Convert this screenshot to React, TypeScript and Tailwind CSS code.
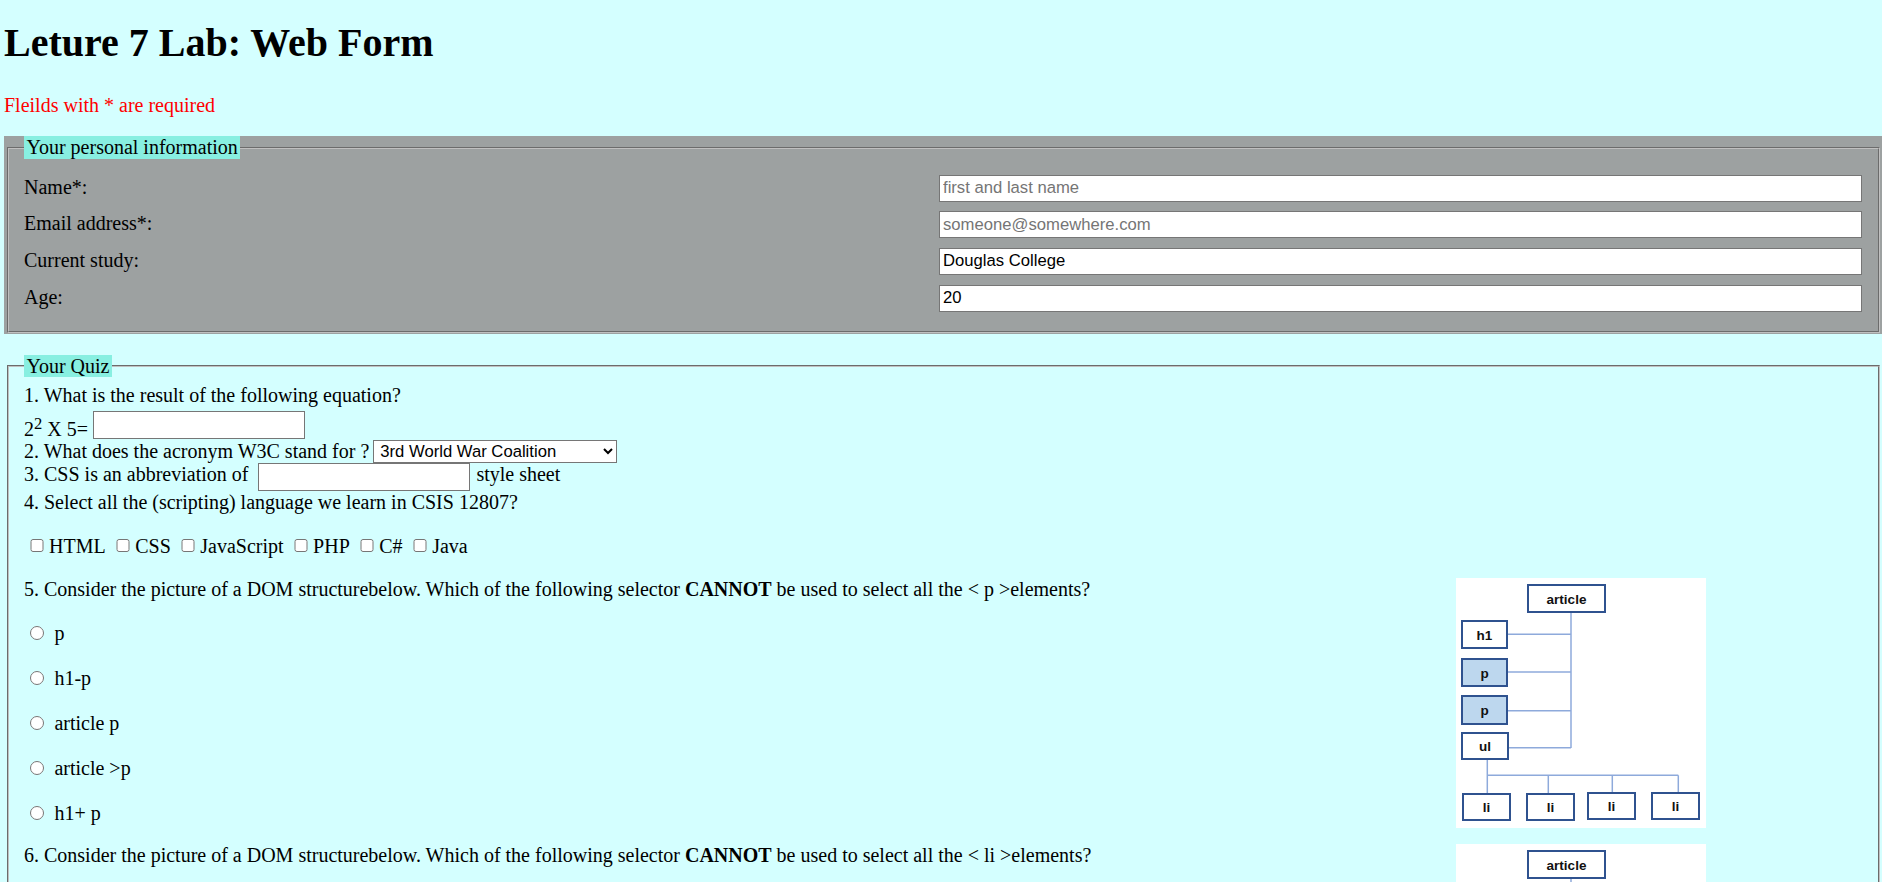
import React from 'react';

const inputCls =
  "bg-white border border-[#767676] px-[3px] font-['Liberation_Sans',Arial,sans-serif] text-[16.67px] text-black placeholder:text-[#757575] outline-none";

interface DiagramProps {
  highlight: 'p' | 'li';
}

const Node = ({ x, y, w, h, label, on }: { x: number; y: number; w: number; h: number; label: string; on?: boolean }) => (
  <g>
    <rect x={x + 1} y={y + 1} width={w - 2} height={h - 2} fill={on ? '#bdd7ee' : '#ffffff'} stroke="#2f528f" strokeWidth={2} />
    <text
      x={x + w / 2}
      y={y + h / 2 + 5}
      textAnchor="middle"
      fontFamily="'Liberation Sans', Arial, sans-serif"
      fontWeight={700}
      fontSize={13.5}
      fill="#111111"
    >
      {label}
    </text>
  </g>
);

// DOM tree picture
const Diagram: React.FC<DiagramProps> = ({ highlight }) => {
  const p = highlight === 'p';
  const li = highlight === 'li';
  return (
    <svg width={250} height={250} viewBox="0 0 250 250" className="block">
      <rect x={0} y={0} width={250} height={250} fill="#ffffff" />
      <g stroke="#8eaadb" strokeWidth={1.5} fill="none">
        <line x1={115} y1={35} x2={115} y2={170} />
        <line x1={52} y1={56.3} x2={115} y2={56.3} />
        <line x1={52} y1={94} x2={115} y2={94} />
        <line x1={52} y1={132.7} x2={115} y2={132.7} />
        <line x1={53} y1={169.7} x2={115} y2={169.7} />
        <line x1={31.3} y1={182} x2={31.3} y2={215} />
        <line x1={31.3} y1={197.3} x2={222.3} y2={197.3} />
        <line x1={92.3} y1={197.3} x2={92.3} y2={215} />
        <line x1={156.3} y1={197.3} x2={156.3} y2={214} />
        <line x1={222.3} y1={197.3} x2={222.3} y2={214} />
      </g>
      <Node x={71} y={6} w={79} h={29} label="article" />
      <Node x={5} y={42} w={47} h={29} label="h1" />
      <Node x={5} y={80} w={47} h={29} label="p" on={p} />
      <Node x={5} y={117} w={47} h={30} label="p" on={p} />
      <Node x={5} y={154} w={48} h={28} label="ul" />
      <Node x={6} y={215} w={49} h={28} label="li" on={li} />
      <Node x={70} y={215} w={49} h={28} label="li" on={li} />
      <Node x={131} y={214} w={49} h={28} label="li" on={li} />
      <Node x={195} y={214} w={49} h={28} label="li" on={li} />
    </svg>
  );
};

const RadioRow = ({ name, label, first }: { name: string; label: string; first: boolean }) => (
  <div className={`flex h-[23px] ${first ? 'mt-[21px]' : 'mt-[22px]'}`}>
    <input type="radio" name={name} className="ml-[6.4px] mt-[4.25px] h-[14px] w-[14px]" />
    <span className="ml-[10px] leading-[23px]">{label}</span>
  </div>
);

const langs = ['HTML', 'CSS', 'JavaScript', 'PHP', 'C#', 'Java'];
const q5 = ['p', 'h1-p', 'article p', 'article >p', 'h1+ p'];
const q6 = ['li', 'ul li', 'ul > li', 'article li', 'article > li'];

export default function App() {
  return (
    <div className="min-h-screen bg-[#d4ffff] pl-[4px] pt-[20px] pb-10 font-['Liberation_Serif','Times_New_Roman',serif] text-[20px] text-black">
      <h1 className="text-[40px] font-bold leading-[46px]">Leture 7 Lab: Web Form</h1>
      <p className="mt-[27.5px] leading-[23px] text-[#ff0000]">Fleilds with * are required</p>

      <form>
        {/* Personal info */}
        <div className="mt-[19.5px] bg-[#9da1a1] pb-[1px]">
          <fieldset className="ml-[3px] mr-[2px] [border:2px_groove_#c0c0c0] px-[15px] pb-[19px]">
            <legend className="bg-[#88efe1] px-[2.5px] leading-[23px]">Your personal information</legend>
            <div className="mt-[15.8px] flex flex-col gap-[9.6px]">
              <div className="flex h-[27px]">
                <label className="w-[915px] pt-[1px] leading-[23px]">Name*:</label>
                <input className={`${inputCls} h-[27px] w-[923px]`} placeholder="first and last name" />
              </div>
              <div className="flex h-[27px]">
                <label className="w-[915px] pt-[1px] leading-[23px]">Email address*:</label>
                <input className={`${inputCls} h-[27px] w-[923px]`} placeholder="someone@somewhere.com" />
              </div>
              <div className="flex h-[27px]">
                <label className="w-[915px] pt-[1px] leading-[23px]">Current study:</label>
                <input className={`${inputCls} h-[27px] w-[923px]`} defaultValue="Douglas College" />
              </div>
              <div className="flex h-[27px]">
                <label className="w-[915px] pt-[1px] leading-[23px]">Age:</label>
                <input className={`${inputCls} h-[27px] w-[923px]`} defaultValue="20" />
              </div>
            </div>
          </fieldset>
        </div>

        {/* Quiz */}
        <fieldset className="mt-[21px] ml-[3px] mr-[2px] [border:2px_groove_#c0c0c0] px-[15px] pb-[30px]">
          <legend className="bg-[#88efe1] px-[2.5px] leading-[22.3px]">Your Quiz</legend>

          <div className="mt-[7px] leading-[23px]">1. What is the result of the following equation?</div>
          <div className="flex h-[33px]">
            <span className="mt-[11.3px] leading-[23px]">
              2<sup className="relative -top-[7px] text-[16.6px] leading-none">2</sup> X 5=
            </span>
            <input className={`${inputCls} ml-[5px] mt-[4.3px] h-[27.4px] w-[212px]`} />
          </div>
          <div className="flex h-[23px]">
            <span className="leading-[23px]">2. What does the acronym W3C stand for ?</span>
            <select
              defaultValue="a"
              className="ml-[4px] mt-[0.3px] h-[22.4px] w-[244px] border border-[#767676] bg-white pl-[2px] font-['Liberation_Sans',Arial,sans-serif] text-[16.67px] text-black"
            >
              <option value="a">3rd World War Coalition</option>
              <option value="b">World Wide Web Consortium</option>
              <option value="c">Web 3 Committee</option>
            </select>
          </div>
          <div className="flex h-[28px]">
            <span className="mt-[0.45px] leading-[23px]">3. CSS is an abbreviation of</span>
            <input className={`${inputCls} ml-[10px] mt-[0.3px] h-[27.4px] w-[212px]`} />
            <span className="ml-[6px] mt-[0.45px] leading-[23px]">style sheet</span>
          </div>
          <div className="leading-[23px]">4. Select all the (scripting) language we learn in CSIS 12807?</div>

          <div className="mt-[21px] flex h-[23px]">
            {langs.map((l, i) => (
              <label key={l} className="flex">
                <input type="checkbox" className={`mt-[4px] h-[13px] w-[14px] ${i === 0 ? 'ml-[5.5px]' : 'ml-[10px]'}`} />
                <span className="ml-[5.5px] leading-[23px]">{l}</span>
              </label>
            ))}
          </div>

          <div className="mt-[20px] flex">
            <div className="flex-1">
              <div className="leading-[23px]">
                5. Consider the picture of a DOM structurebelow. Which of the following selector <b className="font-bold">CANNOT</b> be used to select all the &lt; p &gt;elements?
              </div>
              {q5.map((o, i) => (
                <RadioRow key={o} name="q5" label={o} first={i === 0} />
              ))}
            </div>
            <div className="mr-[157px]">
              <Diagram highlight="p" />
            </div>
          </div>

          <div className="mt-[16.5px] flex">
            <div className="flex-1">
              <div className="leading-[23px]">
                6. Consider the picture of a DOM structurebelow. Which of the following selector <b className="font-bold">CANNOT</b> be used to select all the &lt; li &gt;elements?
              </div>
              {q6.map((o, i) => (
                <RadioRow key={o} name="q6" label={o} first={i === 0} />
              ))}
            </div>
            <div className="mr-[157px]">
              <Diagram highlight="li" />
            </div>
          </div>
        </fieldset>
      </form>
    </div>
  );
}
